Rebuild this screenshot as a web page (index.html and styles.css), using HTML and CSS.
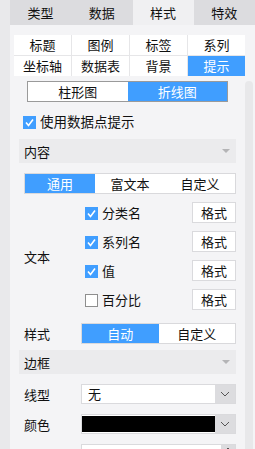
FILE: index.html
```html
<!DOCTYPE html>
<html>
    <head>
        <meta http-equiv="Content-Type" content="text/html; charset=UTF-8">
        <title>提示设置</title>
        <link rel="stylesheet" href="styles.css">
    </head>
    <body>
        <section class="app">
            <div class="side"></div>
            <div class="main">
                <nav class="tabs">
                    <span class="tab">类型</span>
                    <span class="tab">数据</span>
                    <span class="tab active">样式</span>
                    <span class="tab">特效</span>
                </nav>
                <div class="wrap">
                    <div class="content">
                        <div class="subtabs">
                            <span>标题</span><span>图例</span><span>标签</span><span>系列</span>
                            <span>坐标轴</span><span>数据表</span><span>背景</span><span class="on">提示</span>
                        </div>

                        <div class="seg chart">
                            <span>柱形图</span>
                            <span class="on">折线图</span>
                        </div>

                        <label class="check-row">
                            <i class="cb checked"></i>使用数据点提示
                        </label>

                        <div class="group-head">内容<i class="caret"></i></div>

                        <div class="seg kind">
                            <span class="on">通用</span>
                            <span>富文本</span>
                            <span>自定义</span>
                        </div>

                        <div class="text-group">
                            <div class="lbl">文本</div>
                            <div class="items">
                                <div class="item"><label><i class="cb checked"></i>分类名</label><span class="btn">格式</span></div>
                                <div class="item"><label><i class="cb checked"></i>系列名</label><span class="btn">格式</span></div>
                                <div class="item"><label><i class="cb checked"></i>值</label><span class="btn">格式</span></div>
                                <div class="item"><label><i class="cb"></i>百分比</label><span class="btn">格式</span></div>
                            </div>
                        </div>

                        <div class="row style-row">
                            <div class="lbl">样式</div>
                            <div class="seg auto">
                                <span class="on">自动</span>
                                <span>自定义</span>
                            </div>
                        </div>

                        <div class="group-head">边框<i class="caret"></i></div>

                        <div class="row">
                            <div class="lbl">线型</div>
                            <div class="select">
                                <span class="val">无</span>
                                <span class="drop"><svg width="10" height="6" viewBox="0 0 10 6"><polyline points="1,1 5,5 9,1" fill="none" stroke="#555" stroke-width="1"/></svg></span>
                            </div>
                        </div>

                        <div class="row">
                            <div class="lbl">颜色</div>
                            <div class="select">
                                <span class="val swatch"></span>
                                <span class="drop"><svg width="10" height="6" viewBox="0 0 10 6"><polyline points="1,1 5,5 9,1" fill="none" stroke="#555" stroke-width="1"/></svg></span>
                            </div>
                        </div>

                        <div class="row">
                            <div class="lbl">圆角</div>
                            <div class="select number">
                                <span class="val">0</span>
                                <span class="spin"><svg width="10" height="6" viewBox="0 0 10 6"><polyline points="1,5 5,1 9,5" fill="none" stroke="#555" stroke-width="1"/></svg></span>
                            </div>
                        </div>
                    </div>
                    <div class="scroll"><div class="thumb"></div></div>
                </div>
            </div>
        </section>
    </body>
</html>
```

FILE: styles.css
```css
body {
    margin: 0;
    background: #f4f4f6;
    font-family: "Noto Sans CJK SC", "Noto Sans", sans-serif;
    font-size: 13px;
    color: #111;
    overflow: hidden;
}
.app {
    display: flex;
    height: 449px;
}
.side {
    width: 10px;
    background: #e9e9eb;
}
.main {
    flex: 1;
}
.tabs {
    display: grid;
    grid-template-columns: repeat(4, 1fr);
    height: 25px;
}
.tab {
    background: #dcdcdf;
    text-align: center;
    line-height: 25px;
    font-size: 13px;
}
.tab.active {
    background: #f0f0f2;
}
.wrap {
    display: flex;
}
.content {
    width: 235px;
}
.scroll {
    width: 10px;
    padding-top: 56px;
}
.thumb {
    width: 8px;
    height: 400px;
    background: #e8e8ea;
    border-radius: 4px;
}

.subtabs {
    display: grid;
    grid-template-columns: repeat(4, 57px);
    grid-auto-rows: 20px;
    gap: 1px;
    background: #e6e6e8;
    margin: 10px 0 0 4px;
    width: 231px;
}
.subtabs span {
    background: #fff;
    text-align: center;
    line-height: 20px;
}
.subtabs span.on {
    background: #409eff;
    color: #fff;
}

.seg {
    display: flex;
    box-sizing: border-box;
    height: 21px;
    border: 1px solid #d9d9dc;
    background: #fff;
}
.seg span {
    flex: 1;
    text-align: center;
    line-height: 19px;
}
.seg span.on {
    background: #409eff;
    color: #fff;
}
.chart {
    margin: 5px 0 0 17px;
    width: 201px;
    border-color: #9a9a9a;
}
.kind {
    margin: 10px 0 0 14px;
    width: 212px;
}
.auto {
    width: 155px;
}

.cb {
    display: inline-block;
    box-sizing: border-box;
    width: 13px;
    height: 13px;
    border: 1px solid #8e8e8e;
    background: #fff;
    margin-right: 4px;
    vertical-align: -2px;
}
.cb.checked {
    border: none;
    background: #409eff url("data:image/svg+xml,%3Csvg xmlns='http://www.w3.org/2000/svg' width='13' height='13'%3E%3Cpolyline points='3,6.5 5.5,9.5 10,3.5' fill='none' stroke='white' stroke-width='1.6'/%3E%3C/svg%3E") no-repeat;
}
.check-row {
    display: block;
    margin: 8px 0 0 13px;
    height: 22px;
    line-height: 22px;
    font-size: 13.5px;
}

.group-head {
    display: flex;
    align-items: center;
    justify-content: space-between;
    margin: 7px 0 0 9px;
    width: 217px;
    height: 24px;
    padding: 0 6px 0 5px;
    box-sizing: border-box;
    background: #ebebed;
}
.caret {
    width: 0;
    height: 0;
    border-left: 4px solid transparent;
    border-right: 4px solid transparent;
    border-top: 4px solid #b4b4b6;
}

.text-group {
    display: flex;
    align-items: center;
    margin: 8px 0 0 14px;
    width: 212px;
}
.text-group .lbl {
    width: 61px;
}
.items {
    flex: 1;
    display: flex;
    flex-direction: column;
    gap: 8px;
}
.item {
    display: flex;
    justify-content: space-between;
    align-items: center;
    height: 21px;
}
.btn {
    box-sizing: border-box;
    width: 44px;
    height: 21px;
    line-height: 19px;
    text-align: center;
    border: 1px solid #dadadd;
    background: #fff;
}

.row {
    display: flex;
    align-items: center;
    margin: 10px 0 0 14px;
    width: 212px;
    height: 20px;
}
.row .lbl {
    width: 57px;
}
.style-row {
    margin-top: 13px;
    height: 21px;
}
.style-row + .group-head {
    margin-top: 6px;
}
.select {
    flex: 1;
    display: flex;
    height: 20px;
    box-sizing: border-box;
    border: 1px solid #dadadd;
    background: #fff;
}
.select .val {
    flex: 1;
    padding-left: 6px;
    line-height: 18px;
}
.select .swatch {
    background: #000;
    margin: 1px 0;
}
.drop {
    width: 20px;
    background: #dcdcdf;
    display: flex;
    align-items: center;
    justify-content: center;
}
.spin {
    width: 14px;
    background: #dcdcdf;
    display: flex;
    justify-content: center;
    padding-top: 2px;
}
```
